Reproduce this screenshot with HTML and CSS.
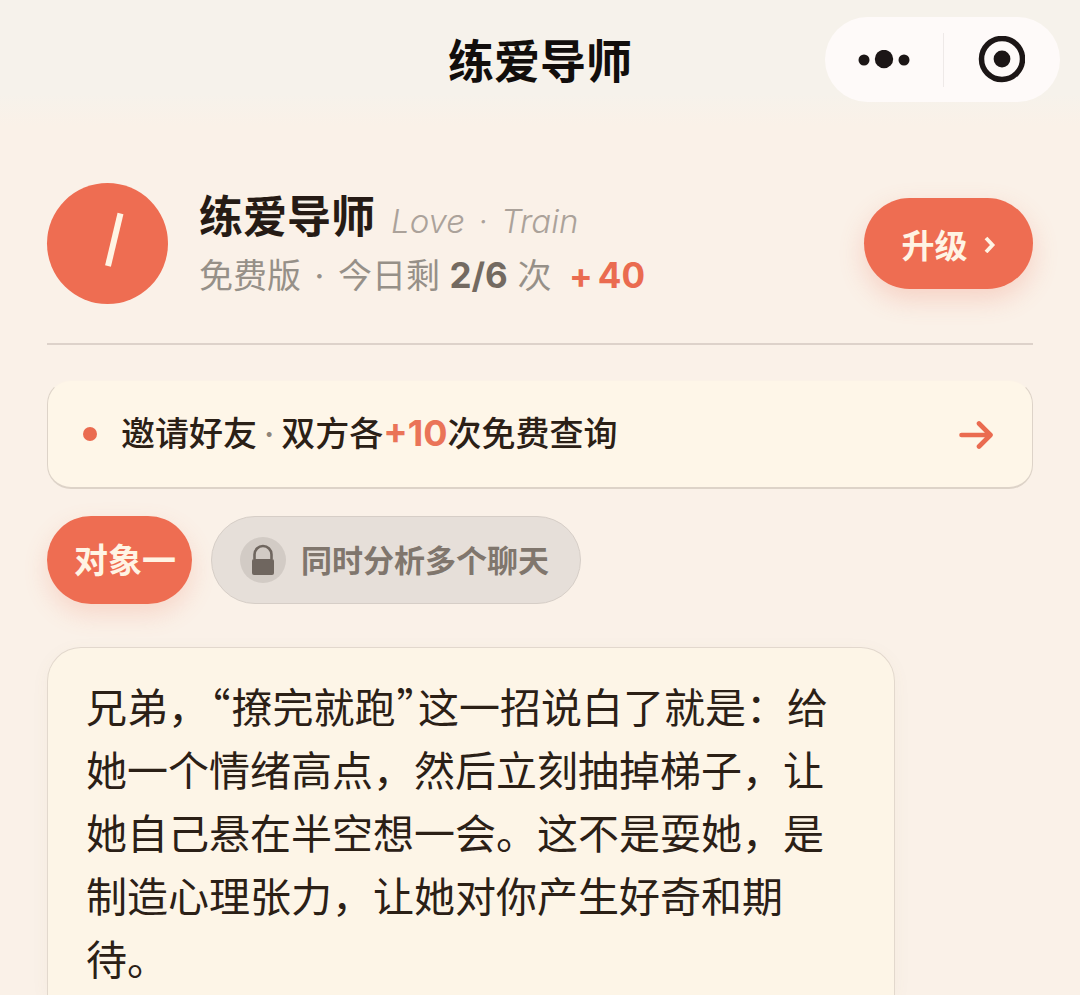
FILE: index.html
```html
<!DOCTYPE html>
<html lang="zh-CN">
<head>
<meta charset="utf-8">
<meta name="viewport" content="width=device-width, initial-scale=1">
<title>练爱导师</title>
<link rel="stylesheet" href="styles.css">
</head>
<body>
<header class="navbar">
  <h1 class="navbar-title">练爱导师</h1>
  <div class="capsule">
    <button class="capsule-btn" type="button" aria-label="更多">
      <svg width="52" height="20" viewBox="0 0 52 20" fill="#1c1616"><circle cx="6" cy="10" r="5.500"/><circle cx="26" cy="9" r="9.200"/><circle cx="46" cy="10" r="5.500"/></svg>
    </button>
    <button class="capsule-btn" type="button" aria-label="关闭">
      <svg width="48" height="48" viewBox="0 0 48 48"><circle cx="25" cy="23" r="20.500" fill="none" stroke="#1c1616" stroke-width="5.500"/><circle cx="25" cy="23" r="8.400" fill="#1c1616"/></svg>
    </button>
  </div>
</header>
<main class="page">
  <section class="profile">
    <div class="avatar">
      <svg width="120" height="120" viewBox="0 0 120 120"><path d="M73.500 30.500L61 83" stroke="#fff4e4" stroke-width="6" fill="none"/></svg>
    </div>
    <div class="profile-info">
      <div class="name-row"><h2 class="name">练爱导师</h2><span class="name-en">Love <span class="dot">·</span> Train</span></div>
      <p class="quota">免费版 <span class="dot">·</span> 今日剩 <strong class="count">2/6</strong> 次 <span class="bonus"><span>+</span><span>40</span></span></p>
    </div>
    <button class="upgrade" type="button">升级
      <svg width="12" height="18" viewBox="0 0 12 18"><path d="M2 3l6.500 7L2 17" fill="none" stroke="#fff4e4" stroke-width="3.800"/></svg>
    </button>
  </section>
  <a class="invite" href="#invite">
    <span class="invite-dot"></span>
    <span class="invite-text">邀请好友<span class="sep">·</span>双方各<strong class="plus">+10</strong>次免费查询</span>
    <svg width="34" height="30" viewBox="0 0 34 30"><path d="M2.500 16H31M20 4.500L31.500 16L20 27.500" fill="none" stroke="#ea6b50" stroke-width="4.600" stroke-linecap="round" stroke-linejoin="round"/></svg>
  </a>
  <nav class="tabs">
    <button class="tab tab-active" type="button"><span class="tab-label">对象一</span></button>
    <button class="tab tab-locked" type="button">
      <span class="lock"><svg width="24" height="32" viewBox="0 0 24 32"><path d="M3.500 15V10.500a8.500 8.500 0 0 1 17 0V15" fill="none" stroke="#6f665f" stroke-width="2.600"/><rect x="1" y="15" width="22" height="16" rx="2" fill="#6f665f"/></svg></span>
      <span class="tab-label">同时分析多个聊天</span>
    </button>
  </nav>
  <article class="message"><p>兄弟，<span class="quote">“</span>撩完就跑<span class="quote">”</span>这一招说白了就是：给她一个情绪高点，然后立刻抽掉梯子，让她自己悬在半空想一会。这不是耍她，是制造心理张力，让她对你产生好奇和期待。</p></article>
</main>
</body>
</html>
```
FILE: styles.css
```css
* { box-sizing: border-box; }
body {
  margin: 0;
  min-height: 100vh;
  display: flex;
  flex-direction: column;
  background: #faf1e8;
  color: #2b2016;
  font-family: Inter, "Noto Sans CJK SC", sans-serif;
}
h1, h2, p { margin: 0; }
button { border: 0; padding: 0; font: inherit; color: inherit; background: none; cursor: pointer; }
svg { display: block; flex: none; }

.navbar {
  display: grid;
  grid-template-columns: 1fr auto 1fr;
  align-items: center;
  padding: 17px 20px 23px;
  background: linear-gradient(#f6f2eb 75%, #faf1e8);
}
.navbar-title { grid-column: 2; padding-top: 2px; font-size: 46px; line-height: 60px; font-weight: 700; color: #120e0c; }
.capsule {
  justify-self: end;
  display: grid;
  grid-template-columns: 1fr 1fr;
  width: 235px;
  height: 85px;
  border-radius: 43px;
  background: #fefaf9;
}
.capsule-btn { display: grid; place-items: center; }
.capsule-btn + .capsule-btn {
  background: linear-gradient(#eee9e8, #eee9e8) left center / 1px 54px no-repeat;
}

.page {
  flex: 1;
  display: flex;
  flex-direction: column;
  padding: 58px 47px 0;
}
.profile {
  display: flex;
  align-items: center;
  gap: 31px;
  padding-bottom: 39px;
  border-bottom: 2px solid #ddd2ca;
}
.avatar { flex: none; width: 121px; height: 121px; border-radius: 50%; background: #ee6d52; }
.profile-info { flex: 1; padding-top: 4px; }
.name-row { display: flex; align-items: baseline; gap: 16px; }
.name { font-size: 44px; line-height: 60px; font-weight: 700; color: #261b15; }
.name-en { font-size: 33px; font-style: italic; font-weight: 300; color: #aba29a; }
.dot { margin: 0 4px; }
.quota { font-size: 34px; line-height: 56px; color: #969088; }
.count { font-size: 35px; font-weight: 700; color: #736a61; }
.bonus { display: inline-flex; gap: 5px; margin-left: 8px; font-size: 35px; font-weight: 700; color: #ea6b50; }
.upgrade {
  display: flex;
  align-items: center;
  justify-content: center;
  gap: 16px;
  width: 169px;
  height: 91px;
  border-radius: 46px;
  background: #ee6d52;
  color: #fff4e4;
  font-size: 33px;
  font-weight: 700;
  box-shadow: 0 10px 26px rgba(238, 109, 82, 0.24);
}

.invite {
  display: flex;
  align-items: center;
  margin-top: 35px;
  padding: 0 39px 0 35px;
  min-height: 109px;
  border: 1px solid #ddd3c8;
  border-top-color: #fbf2e7;
  border-bottom-width: 2px;
  border-radius: 24px;
  background: #fef6e8;
  color: inherit;
  text-decoration: none;
}
.invite-dot { width: 14px; height: 14px; border-radius: 50%; background: #ea6b50; }
.invite-text { flex: 1; margin-left: 24px; font-size: 34px; line-height: 52px; font-weight: 500; }
.sep { margin: 0 7px; color: #8f857a; }
.plus { font-size: 36px; line-height: 1; font-weight: 700; color: #ea7458; }

.tabs { display: flex; gap: 19px; margin-top: 27px; }
.tab { display: flex; align-items: center; height: 88px; border-radius: 44px; font-weight: 700; }
.tab-label { padding-bottom: 4px; }
.tab-active {
  padding: 0 16px 0 27px;
  background: #ee6d52;
  color: #fff4e4;
  font-size: 34px;
  box-shadow: 0 10px 24px rgba(238, 109, 82, 0.2);
}
.tab-locked {
  gap: 15px;
  padding: 0 31px 0 28px;
  border: 1px solid #d6cec7;
  background: #e6dfd9;
  color: #80766d;
  font-size: 31px;
}
.lock { display: grid; place-items: center; width: 46px; height: 46px; border-radius: 50%; background: #d2cbc5; }

.message {
  flex: 1;
  width: 86%;
  margin-top: 43px;
  padding: 26px 38px 0;
  border: 1px solid #e2d8cd;
  border-bottom: 0;
  border-radius: 34px 34px 0 0;
  background: #fdf5e7;
  box-shadow: 0 4px 18px rgba(140, 110, 80, 0.05);
  font-family: "Noto Sans CJK SC", sans-serif;
  font-size: 41px;
  line-height: 63px;
}
.quote { margin: 0 1px; font-feature-settings: "halt"; }
```
